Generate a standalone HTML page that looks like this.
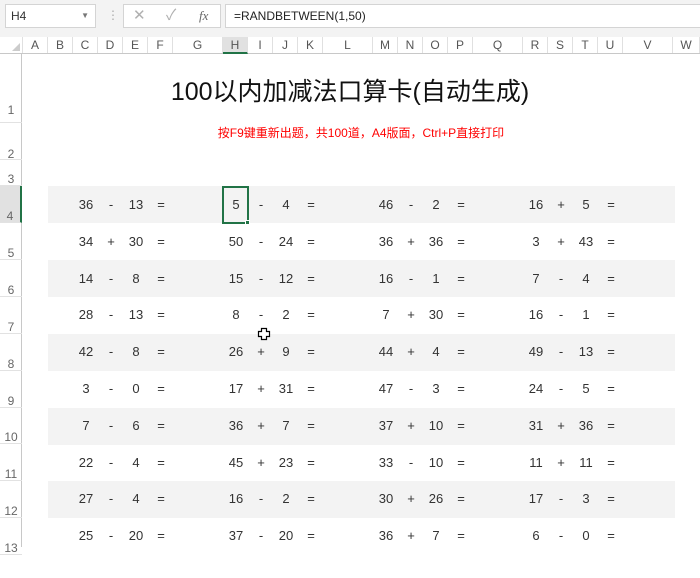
<!DOCTYPE html>
<html><head><meta charset="utf-8"><style>
*{margin:0;padding:0;box-sizing:border-box}
body{width:700px;height:547px;overflow:hidden;background:#fff;font-family:"Liberation Sans","Noto Sans CJK SC",sans-serif;position:relative}
.a{position:absolute}
.top{left:0;top:0;width:700px;height:37px;background:#f3f3f3}
.box{background:#fff;border:1px solid #d4d4d4}
.colh{left:0;top:37px;width:700px;height:17px;background:#fff;border-bottom:1px solid #c8c8c8}
.ch{position:absolute;top:0;height:16px;font-size:12px;color:#555;text-align:center;line-height:17px;border-right:1px solid #e0e0e0}
.rowh{left:0;top:54px;width:22px;height:493px;background:#fff;border-right:1px solid #c8c8c8}
.rl{position:absolute;left:0;width:22px;font-size:12px;color:#666;text-align:center;border-bottom:1px solid #e2e2e2}
.stripe{left:48px;width:627px;height:37px;background:#f3f3f3}
.t{position:absolute;width:30px;margin-left:-15px;text-align:center;font-size:13px;color:#333;line-height:16px}
</style></head><body>
<div class="a top"></div>
<div class="a box" style="left:5px;top:4px;width:91px;height:24px;font-size:12px;line-height:22px;padding-left:5px;color:#333">H4<span style="position:absolute;right:6px;top:0;font-size:8px;color:#777">▼</span></div>
<div class="a" style="left:107px;top:8px;color:#aaa;font-size:12px">⋮</div>
<div class="a box" style="left:123px;top:4px;width:98px;height:24px;color:#b0b0b0;font-size:15px;line-height:22px"><span style="position:absolute;left:9px">✕</span><span style="position:absolute;left:42px">✓</span><span style="position:absolute;left:75px;font-family:'Liberation Serif',serif;font-style:italic;color:#666;font-size:13px">fx</span></div>
<div class="a box" style="left:225px;top:4px;width:480px;height:24px;font-size:12px;line-height:22px;padding-left:8px;color:#222">=RANDBETWEEN(1,50)</div>
<div class="a colh">
<div class="ch" style="left:0;width:23px"><span style="position:absolute;left:12px;top:6px;width:0;height:0;border-left:8px solid transparent;border-bottom:8px solid #ccc"></span></div>
<div class="ch" style="left:23px;width:25px">A</div><div class="ch" style="left:48px;width:25px">B</div><div class="ch" style="left:73px;width:25px">C</div><div class="ch" style="left:98px;width:25px">D</div><div class="ch" style="left:123px;width:25px">E</div><div class="ch" style="left:148px;width:25px">F</div><div class="ch" style="left:173px;width:50px">G</div><div class="ch" style="left:223px;width:25px;background:#e1e1e1;border-bottom:2px solid #217346;height:17px">H</div><div class="ch" style="left:248px;width:25px">I</div><div class="ch" style="left:273px;width:25px">J</div><div class="ch" style="left:298px;width:25px">K</div><div class="ch" style="left:323px;width:50px">L</div><div class="ch" style="left:373px;width:25px">M</div><div class="ch" style="left:398px;width:25px">N</div><div class="ch" style="left:423px;width:25px">O</div><div class="ch" style="left:448px;width:25px">P</div><div class="ch" style="left:473px;width:50px">Q</div><div class="ch" style="left:523px;width:25px">R</div><div class="ch" style="left:548px;width:25px">S</div><div class="ch" style="left:573px;width:25px">T</div><div class="ch" style="left:598px;width:25px">U</div><div class="ch" style="left:623px;width:50px">V</div><div class="ch" style="left:673px;width:27px">W</div>
</div>
<div class="a rowh">
<div class="rl" style="top:0;height:69px;line-height:112px">1</div>
<div class="rl" style="top:69px;height:37px;line-height:62px">2</div>
<div class="rl" style="top:106px;height:26px;line-height:38px">3</div>
<div class="rl" style="top:132px;height:37px;line-height:60px;background:#e1e1e1;border-right:2px solid #217346">4</div>
<div class="rl" style="top:169px;height:37px;line-height:60px">5</div>
<div class="rl" style="top:206px;height:37px;line-height:60px">6</div>
<div class="rl" style="top:243px;height:37px;line-height:60px">7</div>
<div class="rl" style="top:280px;height:37px;line-height:60px">8</div>
<div class="rl" style="top:317px;height:37px;line-height:60px">9</div>
<div class="rl" style="top:353px;height:37px;line-height:60px">10</div>
<div class="rl" style="top:390px;height:37px;line-height:60px">11</div>
<div class="rl" style="top:427px;height:37px;line-height:60px">12</div>
<div class="rl" style="top:464px;height:37px;line-height:60px">13</div>
</div>
<div class="a" style="left:0;top:72px;width:700px;text-align:center;font-size:25px;color:#111">100以内加减法口算卡(自动生成)</div>
<div class="a" style="left:210px;top:124px;width:302px;text-align:center;font-size:12px;color:#f00">按F9键重新出题，共100道，A4版面，Ctrl+P直接打印</div>
<div class="a stripe" style="top:186px"></div>
<div class="a stripe" style="top:260px"></div>
<div class="a stripe" style="top:334px"></div>
<div class="a stripe" style="top:408px"></div>
<div class="a stripe" style="top:481px"></div>
<div id="g"></div>
<div class="a" style="left:222px;top:186px;width:27px;height:38px;border:2px solid #217346"></div>
<div class="a" style="left:245px;top:220px;width:5px;height:5px;background:#217346;border:1px solid #fff"></div>
<svg class="a" style="left:257px;top:327px" width="14" height="14" viewBox="0 0 14 14"><path d="M4.5 1.5h5v3h3v5h-3v3h-5v-3h-3v-5h3z" fill="#fff" stroke="#000" stroke-width="1.2"/></svg>
<script>
var d=[["36-13","5-4","46-2","16+5"],["34+30","50-24","36+36","3+43"],["14-8","15-12","16-1","7-4"],["28-13","8-2","7+30","16-1"],["42-8","26+9","44+4","49-13"],["3-0","17+31","47-3","24-5"],["7-6","36+7","37+10","31+36"],["22-4","45+23","33-10","11+11"],["27-4","16-2","30+26","17-3"],["25-20","37-20","36+7","6-0"]];
var h="";
for(var r=0;r<10;r++){var y=197+r*36.8;for(var c=0;c<4;c++){var m=d[r][c].match(/(\d+)([+-])(\d+)/);var x=86+c*150;
h+='<div class="t" style="left:'+x+'px;top:'+y+'px">'+m[1]+'</div><div class="t" style="left:'+(x+25)+'px;top:'+y+'px">'+m[2]+'</div><div class="t" style="left:'+(x+50)+'px;top:'+y+'px">'+m[3]+'</div><div class="t" style="left:'+(x+75)+'px;top:'+y+'px">=</div>';}}
document.getElementById("g").innerHTML=h;
</script>
</body></html>
